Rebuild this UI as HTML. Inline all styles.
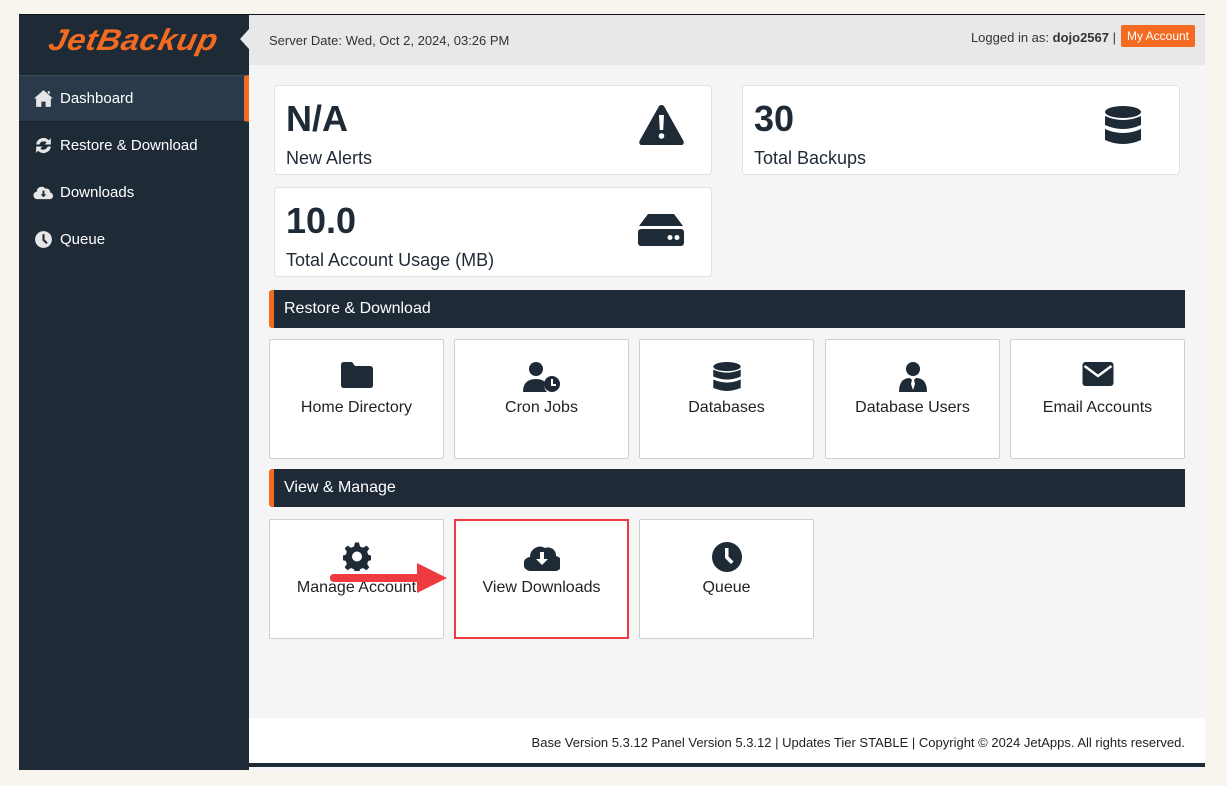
<!DOCTYPE html>
<html><head><meta charset="utf-8"><style>
*{box-sizing:border-box;margin:0;padding:0}
body{width:1227px;height:786px;background:#f8f5ef;font-family:"Liberation Sans",Arial,sans-serif;position:relative;overflow:hidden}
.frame{position:absolute;left:19px;top:14px;width:1186px;height:756px;background:#f5f5f5;border-top:1px solid #111}
.side{position:absolute;left:0;top:0;width:230px;height:755px;background:#1f2a37}
.logo{position:absolute;left:30px;top:9px;font:italic bold 30px "Liberation Sans",sans-serif;color:#f26b21;letter-spacing:0.5px;transform:skewX(-12deg) scaleX(1.08);transform-origin:left}
.menu{position:absolute;left:0;top:60px;width:230px}
.mi{height:47px;display:flex;align-items:center;padding-left:14px;color:#fff;font-size:15px}
.mi svg{width:21px;height:19px;margin-right:6px;fill:#e6e6e6}
.mi.act{background:#2b3a4a;border-right:5px solid #f26b21;border-top:1px solid #3d4b5a;border-bottom:1px solid #18212c}
.hdr{position:absolute;left:230px;top:0;width:956px;height:50px;background:#e8e8e8;font-size:13px;color:#333}
.caret{position:absolute;left:221px;top:14px;width:0;height:0;border-top:10px solid transparent;border-bottom:10px solid transparent;border-right:9px solid #e8e8e8}
.card{position:absolute;background:#fff;border:1px solid #e2e2e2;border-radius:4px}
.card .n{position:absolute;left:11px;top:12px;font-size:36px;font-weight:bold;color:#1f2a37}
.card .l{position:absolute;left:11px;top:62px;font-size:18px;color:#1f2a37}
.card svg{position:absolute;fill:#1f2a37}
.sec{position:absolute;left:250px;width:916px;height:38px;background:#1f2a37;border-left:5px solid #f26b21;border-radius:3px 0 0 3px;color:#fff;font-size:16px;padding:10px 0 0 10px}
.tile{position:absolute;width:175px;height:120px;background:#fff;border:1px solid #cfcfcf;border-radius:2px;text-align:center;font-size:16px;color:#222}
.tile svg{position:absolute;left:50%;top:22px;transform:translateX(-50%);fill:#1f2a37}
.tile span{position:absolute;left:0;right:0;top:59px}
.foot{position:absolute;left:230px;top:703px;width:956px;height:49px;background:#fff;border-bottom:4px solid #1f2a37;font-size:13px;color:#222;text-align:right;padding:17px 20px 0 0}
</style></head><body>
<div class="frame">
 <div class="side">
  <div class="logo">JetBackup</div>
  <div class="menu">
   <div class="mi act"><svg viewBox="0 0 20 18"><path d="M10 1 L1 9 L3 9 L3 17 L8 17 L8 12 L12 12 L12 17 L17 17 L17 9 L19 9 Z M14 2 L16 2 L16 5 L14 4Z"/></svg>Dashboard</div>
   <div class="mi"><svg viewBox="0 0 20 18"><path d="M3 8 A7 7 0 0 1 15 4 L17 2 L17 8 L11 8 L13 6 A4.5 4.5 0 0 0 6 8Z M17 10 A7 7 0 0 1 5 14 L3 16 L3 10 L9 10 L7 12 A4.5 4.5 0 0 0 14 10Z"/></svg>Restore &amp; Download</div>
   <div class="mi"><svg viewBox="0 0 22 18"><path d="M5 16 A4 4 0 0 1 4 8 A5 5 0 0 1 13 5 A4 4 0 0 1 18 9 A3.5 3.5 0 0 1 17 16Z" /><path d="M10 7 h2 v4 h2 l-3 3 l-3 -3 h2z" fill="#1f2a37"/></svg>Downloads</div>
   <div class="mi"><svg viewBox="0 0 20 18"><circle cx="10" cy="9" r="8"/><path d="M9 4 h2 v5 l3 3 -1.4 1.4 -3.6 -3.6z" fill="#1f2a37"/></svg>Queue</div>
  </div>
 </div>
 <div class="caret"></div>
 <div class="hdr">
  <div style="position:absolute;left:20px;top:18px">Server Date: Wed, Oct 2, 2024, 03:26 PM</div>
  <div style="position:absolute;right:89px;top:15px">Logged in as: <b>dojo2567</b> |</div>
  <div style="position:absolute;left:872px;top:10px;width:74px;height:22px;background:#f26b21;border-radius:2px;color:#fff;font-size:12px;text-align:center;line-height:22px">My Account</div>
 </div>
 <div class="card" style="left:255px;top:70px;width:438px;height:90px"><div class="n">N/A</div><div class="l">New Alerts</div>
  <svg style="left:363px;top:18px" width="47" height="42" viewBox="0 0 47 42"><path d="M23.5 1 Q25.5 1 26.5 3 L45.5 37 Q46.5 41 43 41 L4 41 Q0.5 41 1.5 37 L20.5 3 Q21.5 1 23.5 1Z"/><path d="M21 11 h5 l-0.8 15 h-3.4z" fill="#fff"/><circle cx="23.5" cy="32" r="2.8" fill="#fff"/></svg></div>
 <div class="card" style="left:723px;top:70px;width:438px;height:90px"><div class="n">30</div><div class="l">Total Backups</div>
  <svg style="left:362px;top:20px" width="36" height="42" viewBox="0 0 36 42"><ellipse cx="18" cy="6" rx="18" ry="6"/><path d="M0 10 Q18 18 36 10 V19 Q18 27 0 19Z M0 23 Q18 31 36 23 V34 Q18 42 0 34Z"/></svg></div>
 <div class="card" style="left:255px;top:172px;width:438px;height:90px"><div class="n">10.0</div><div class="l">Total Account Usage (MB)</div>
  <svg style="left:363px;top:26px" width="46" height="32" viewBox="0 0 46 32"><path d="M10 0 H36 L45 12 H1Z"/><rect x="0" y="15" width="46" height="17" rx="3"/><circle cx="32" cy="23.5" r="2.5" fill="#fff"/><circle cx="39" cy="23.5" r="2.5" fill="#fff"/></svg></div>

 <div class="sec" style="top:275px">Restore &amp; Download</div>
 <div class="tile" style="left:250px;top:324px"><svg width="32" height="26" viewBox="0 0 32 26"><path d="M0 3 Q0 0 3 0 H11 L14 4 H29 Q32 4 32 7 V23 Q32 26 29 26 H3 Q0 26 0 23Z"/></svg><span>Home Directory</span></div>
 <div class="tile" style="left:435px;top:324px"><svg width="38" height="30" viewBox="0 0 38 30"><circle cx="13" cy="7" r="7"/><path d="M0 30 Q0 17 13 17 Q19 17 22 20 A9 9 0 0 0 24 30Z"/><circle cx="29" cy="22" r="8"/><path d="M28 17 h2 v5 h3 v2 h-5z" fill="#fff"/></svg><span>Cron Jobs</span></div>
 <div class="tile" style="left:620px;top:324px"><svg width="28" height="32" viewBox="0 0 36 42"><ellipse cx="18" cy="6" rx="18" ry="6"/><path d="M0 10 Q18 18 36 10 V19 Q18 27 0 19Z M0 23 Q18 31 36 23 V34 Q18 42 0 34Z"/></svg><span>Databases</span></div>
 <div class="tile" style="left:806px;top:324px"><svg width="28" height="30" viewBox="0 0 28 30"><circle cx="14" cy="7" r="7"/><path d="M0 30 Q0 16 11 16 L14 19 L17 16 Q28 16 28 30Z"/><path d="M13 18 h2 l1 4 -2 6 -2 -6z" fill="#fff"/></svg><span>Database Users</span></div>
 <div class="tile" style="left:991px;top:324px"><svg width="31" height="24" viewBox="0 0 31 24"><rect width="31" height="24" rx="3"/><path d="M2 4 L15.5 14 L29 4" stroke="#fff" stroke-width="2.5" fill="none"/></svg><span>Email Accounts</span></div>

 <div class="sec" style="top:454px">View &amp; Manage</div>
 <div class="tile" style="left:250px;top:504px"><svg width="28" height="29" viewBox="0 0 28 28"><path d="M12 0h4l1 4 3 1.3 3.5-2.2 2.8 2.8-2.2 3.5 1.3 3 4 1v4l-4 1-1.3 3 2.2 3.5-2.8 2.8-3.5-2.2-3 1.3-1 4h-4l-1-4-3-1.3-3.5 2.2-2.8-2.8 2.2-3.5-1.3-3-4-1v-4l4-1 1.3-3-2.2-3.5 2.8-2.8 3.5 2.2 3-1.3z"/><circle cx="14" cy="14" r="5" fill="#fff"/></svg><span>Manage Account</span></div>
 <div class="tile" style="left:435px;top:504px;border:2px solid #ef3b3f;border-radius:0;width:175px"><svg width="36" height="28" viewBox="0 0 36 28"><path d="M7 28 A7 7 0 0 1 6 14 A10 10 0 0 1 21 5 A8 8 0 0 1 32 13 A7.5 7.5 0 0 1 29 28Z"/><path d="M16 9 h4 v7 h4 l-6 6 -6 -6 h4z" fill="#fff"/></svg><span style="top:58px">View Downloads</span></div>
 <div class="tile" style="left:620px;top:504px"><svg width="30" height="30" viewBox="0 0 30 30"><circle cx="15" cy="15" r="15"/><path d="M13 6 h3.5 v8.5 l5 5 -2.5 2.5 -6 -6z" fill="#fff"/></svg><span>Queue</span></div>

 <svg style="position:absolute;left:310px;top:548px" width="120" height="32" viewBox="0 0 120 32"><path d="M5 11 H88 V0 L118 15 L88 30 V19 H5 Q1 19 1 15 Q1 11 5 11Z" fill="#ef3b3f"/></svg>

 <div class="foot">Base Version 5.3.12 Panel Version 5.3.12 | Updates Tier STABLE | Copyright © 2024 JetApps. All rights reserved.</div>
</div>
</body></html>
